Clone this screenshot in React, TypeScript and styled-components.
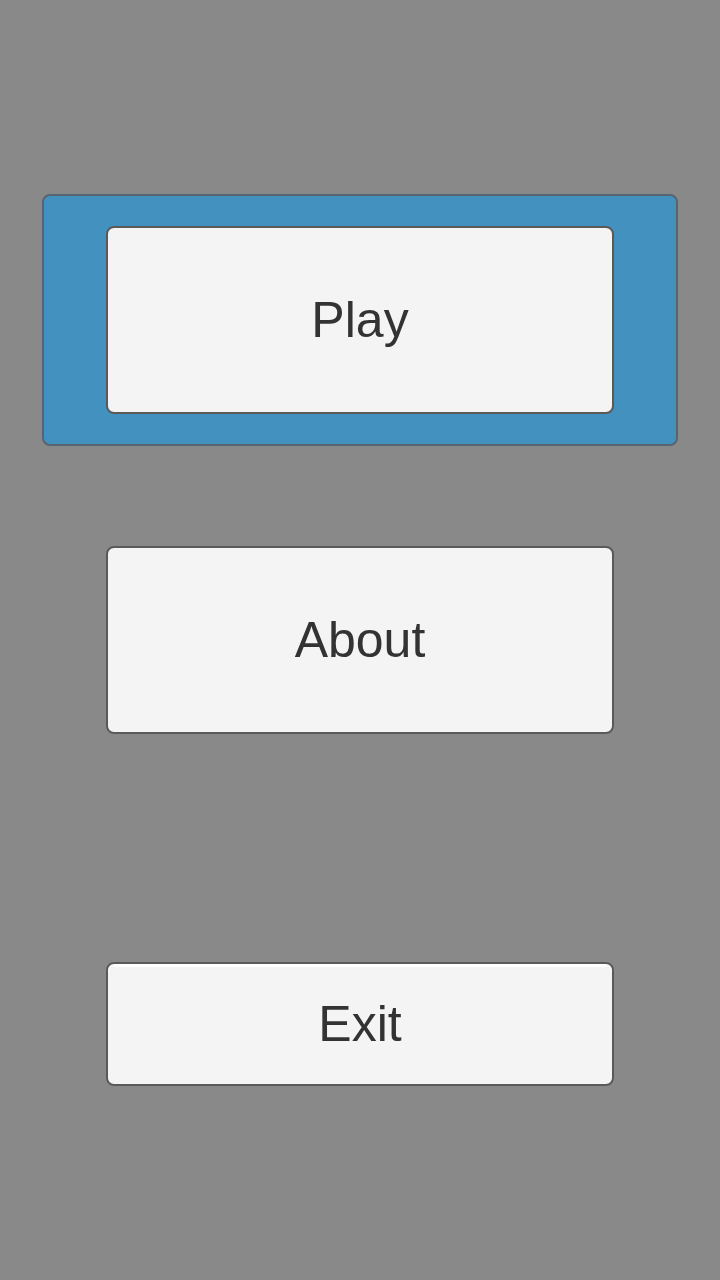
import React from "react";
import styled, { createGlobalStyle } from "styled-components";

const Global = createGlobalStyle`
  html, body { margin: 0; padding: 0; background: #898989; }
  body { font-family: "Liberation Sans", Arial, sans-serif; }
`;

const Screen = styled.div`
  width: 720px;
  height: 1280px;
  display: flex;
  flex-direction: column;
  align-items: center;
  padding-top: 194px;
  box-sizing: border-box;
`;

const Highlight = styled.div`
  width: 636px;
  box-sizing: border-box;
  padding: 30px 62px;
  background: #4391bf;
  border: 2px solid #56656f;
  border-radius: 8px;
  display: flex;
  justify-content: center;
`;

const MenuButton = styled.button<{ $h: number; $mt?: number; $shine?: boolean }>`
  width: 508px;
  height: ${(p) => p.$h}px;
  margin-top: ${(p) => p.$mt ?? 0}px;
  box-sizing: border-box;
  background: #f4f4f4;
  border: 2px solid #5a5a5a;
  border-radius: 8px;
  font-family: "Liberation Sans", Arial, sans-serif;
  font-size: 50px;
  color: #333333;
  display: flex;
  align-items: center;
  justify-content: center;
  padding: 0;
  box-shadow: ${(p) => (p.$shine ? "inset 0 3px 0 #ffffff" : "none")};
  cursor: pointer;
`;

export default function App() {
  return (
    <>
      <Global />
      <Screen>
        <Highlight>
          <MenuButton $h={188}>Play</MenuButton>
        </Highlight>
        <MenuButton $h={188} $mt={100}>About</MenuButton>
        <MenuButton $h={124} $mt={228} $shine>Exit</MenuButton>
      </Screen>
    </>
  );
}
